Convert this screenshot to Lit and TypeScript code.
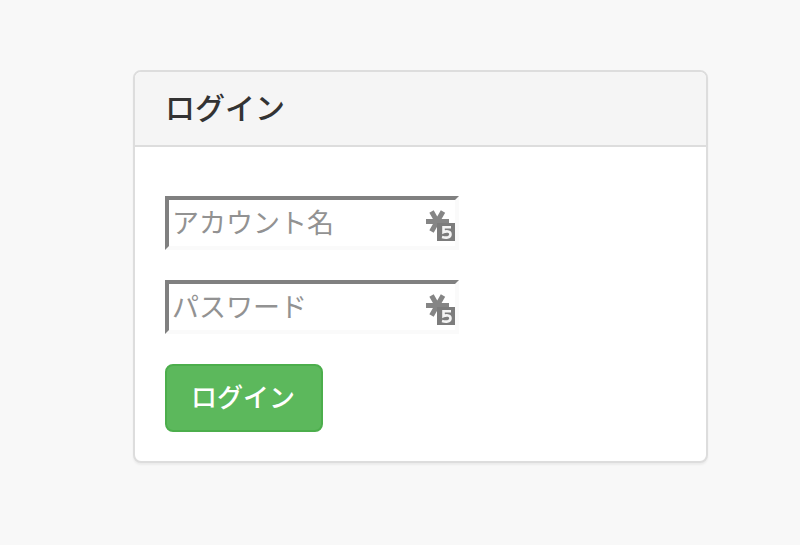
import { LitElement, html, css } from "lit";
import { customElement } from "lit/decorators.js";

@customElement("key-badge")
class KeyBadge extends LitElement {
  static styles = css`
    :host {
      display: block;
      width: 32px;
      height: 32px;
    }
    .icon {
      display: block;
      width: 100%;
      height: 100%;
    }
    .arms {
      stroke: #858585;
      stroke-width: 5;
    }
    .box {
      fill: #7c7c7c;
    }
    .digit {
      fill: none;
      stroke: #f4f4f4;
      stroke-width: 2.6;
    }
  `;

  render() {
    return html`
      <svg class="icon" viewBox="0 0 32 32" aria-hidden="true">
        <path class="arms" d="M2 12.500H25M7.500 2.500L19 22.500M19 2.500L7.500 22.500" />
        <rect class="box" x="13" y="14" width="18" height="18" />
        <path class="digit" d="M27 18.300H19.500V23.200C22 22 26.500 21.800 26.500 25.200C26.500 29.200 21.500 29 18 28" />
      </svg>
    `;
  }
}

@customElement("app-root")
export class AppRoot extends LitElement {
  static styles = css`
    :host {
      display: block;
      box-sizing: border-box;
      min-height: 100vh;
      padding: 70px 92px 70px 133px;
      background: #f8f8f8;
      color: #333;
      font-family: "Noto Sans CJK JP", sans-serif;
      font-size: 27px;
    }
    * {
      box-sizing: border-box;
    }
    .panel {
      background: #fff;
      border: 2px solid #ddd;
      border-radius: 8px;
      box-shadow: 0 2px 2px rgba(0, 0, 0, 0.05);
    }
    .heading {
      padding: 17px 30px 21px;
      background: #f5f5f5;
      border-bottom: 2px solid #ddd;
      border-radius: 6px 6px 0 0;
    }
    .title {
      margin: 0;
      font-size: 30px;
      font-weight: 500;
      line-height: 35px;
    }
    .form {
      display: flex;
      flex-direction: column;
      align-items: flex-start;
      gap: 30px;
      padding: 49px 30px 29px;
    }
    .field {
      position: relative;
      width: 294px;
      max-width: 100%;
    }
    .input {
      display: block;
      width: 100%;
      height: 54px;
      margin: 0;
      padding: 0 34px 4px 3px;
      border: 4px solid;
      border-color: #808080 #fafafa #fafafa #808080;
      border-radius: 0;
      outline: none;
      background: #fff;
      color: #333;
      font: inherit;
    }
    .input::placeholder {
      color: #929292;
      opacity: 1;
    }
    .badge {
      position: absolute;
      right: 3px;
      bottom: 9px;
    }
    .submit {
      height: 68px;
      padding: 0 26px 6px 24px;
      border: 2px solid #4cae4c;
      border-radius: 8px;
      background: #5cb85c;
      color: #fff;
      font-family: inherit;
      font-size: 26px;
      font-weight: 500;
      cursor: pointer;
    }
  `;

  render() {
    return html`
      <main class="panel">
        <header class="heading"><h1 class="title">ログイン</h1></header>
        <form class="form" @submit=${(e: Event) => e.preventDefault()}>
          <div class="field">
            <input class="input" type="text" name="account" placeholder="アカウント名" aria-label="アカウント名" />
            <key-badge class="badge"></key-badge>
          </div>
          <div class="field">
            <input class="input" type="password" name="password" placeholder="パスワード" aria-label="パスワード" />
            <key-badge class="badge"></key-badge>
          </div>
          <button class="submit" type="submit">ログイン</button>
        </form>
      </main>
    `;
  }
}
